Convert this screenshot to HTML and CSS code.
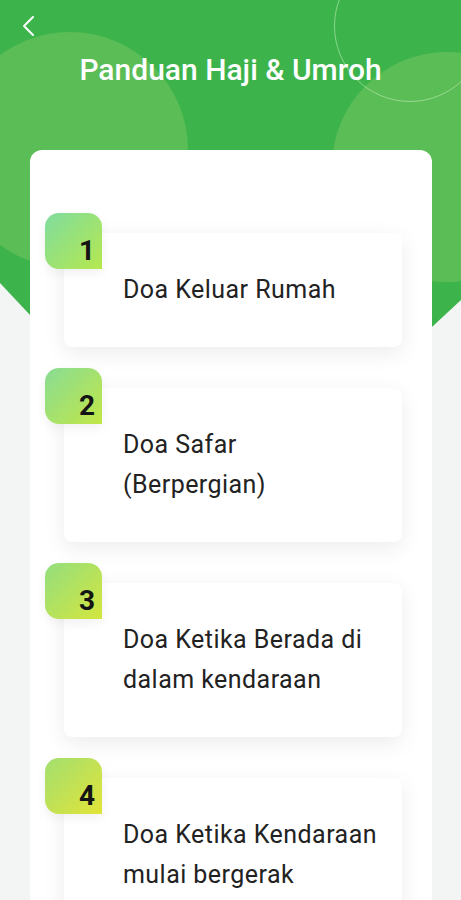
FILE: index.html
```html
<!DOCTYPE html>
<html lang="id">
<head>
<meta charset="utf-8">
<title>Panduan Haji &amp; Umroh</title>
<link rel="stylesheet" href="styles.css">
</head>
<body>
<div class="hero" aria-hidden="true">
  <span class="blob blob-left"></span>
  <span class="blob blob-right"></span>
  <span class="ring"></span>
</div>
<header class="topbar">
  <button class="back" aria-label="Kembali">
    <svg width="16" height="24" viewBox="0 0 16 24"><polyline points="12,3 3,12 12,21" fill="none" stroke="#fff" stroke-width="2" stroke-linecap="round" stroke-linejoin="round"/></svg>
  </button>
</header>
<h1 class="title">Panduan Haji &amp; Umroh</h1>
<main class="panel">
  <ol class="list">
    <li class="item"><span class="badge badge-1">1</span><p class="label">Doa Keluar Rumah</p></li>
    <li class="item"><span class="badge badge-2">2</span><p class="label">Doa Safar<br>(Berpergian)</p></li>
    <li class="item"><span class="badge badge-3">3</span><p class="label">Doa Ketika Berada di<br>dalam kendaraan</p></li>
    <li class="item"><span class="badge badge-4">4</span><p class="label">Doa Ketika Kendaraan<br>mulai bergerak</p></li>
  </ol>
</main>
</body>
</html>
```
FILE: styles.css
```css
* { box-sizing: border-box; }
html, body { margin: 0; padding: 0; }
body {
  background: #f3f5f4;
  font-family: Roboto, "Noto Sans", "Liberation Sans", sans-serif;
  position: relative;
  min-height: 900px;
  overflow-x: hidden;
}
.hero {
  position: absolute;
  top: 0; left: 0;
  width: 100%;
  height: 521px;
  background: #3cb44b;
  clip-path: polygon(0 0, 100% 0, 100% 300px, 223px 521px, 0 283px);
  overflow: hidden;
  z-index: 0;
}
.blob {
  position: absolute;
  border-radius: 50%;
  background: #5bbd56;
}
.blob-left { width: 236px; height: 236px; left: -48px; top: 32px; }
.blob-right { width: 230px; height: 230px; left: 332px; top: 52px; }
.ring {
  position: absolute;
  width: 152px; height: 152px;
  left: 334px; top: -50px;
  border-radius: 50%;
  border: 1.5px solid rgba(200, 240, 190, 0.55);
}
.topbar {
  position: relative;
  z-index: 1;
  height: 52px;
  padding: 14px 0 0 21px;
}
.back {
  display: block;
  background: none;
  border: 0;
  padding: 0;
  width: 16px; height: 24px;
  cursor: pointer;
}
.back svg { display: block; }
.title {
  position: relative;
  z-index: 1;
  margin: 0;
  text-align: center;
  color: #fff;
  font-weight: 500;
  font-size: 30px;
  line-height: 36px;
  letter-spacing: 0;
}
.panel {
  position: relative;
  z-index: 1;
  margin: 62px 29px 0 30px;
  background: #fff;
  border-radius: 12px;
  padding: 83px 30px 40px 34px;
}
.list {
  list-style: none;
  margin: 0;
  padding: 0;
  display: flex;
  flex-direction: column;
  gap: 41px;
}
.item {
  position: relative;
  background: #fff;
  border-radius: 8px;
  box-shadow: 0 6px 22px rgba(0, 0, 0, 0.08);
  padding: 37px 12px 37px 59px;
}
.label {
  margin: 0;
  font-size: 25px;
  line-height: 40px;
  letter-spacing: 0.45px;
  color: #222;
  font-weight: 400;
}
.badge {
  position: absolute;
  top: -20px;
  left: -19px;
  width: 57px;
  height: 56px;
  border-radius: 14px 14px 0 14px;
  display: flex;
  align-items: flex-end;
  justify-content: flex-end;
  padding: 0 7px 4px 0;
  font-size: 28px;
  line-height: 1;
  font-weight: 700;
  color: #141414;
  box-shadow: 0 4px 12px rgba(0, 0, 0, 0.06);
}
.badge-1 { background: linear-gradient(135deg, #7fdc9f 0%, #b6e84e 100%); }
.badge-2 { background: linear-gradient(135deg, #88dc95 0%, #c1e747 100%); }
.badge-3 { background: linear-gradient(135deg, #93de7e 0%, #d4e63e 100%); }
.badge-4 { background: linear-gradient(135deg, #a2df70 0%, #e2e438 100%); }
```
